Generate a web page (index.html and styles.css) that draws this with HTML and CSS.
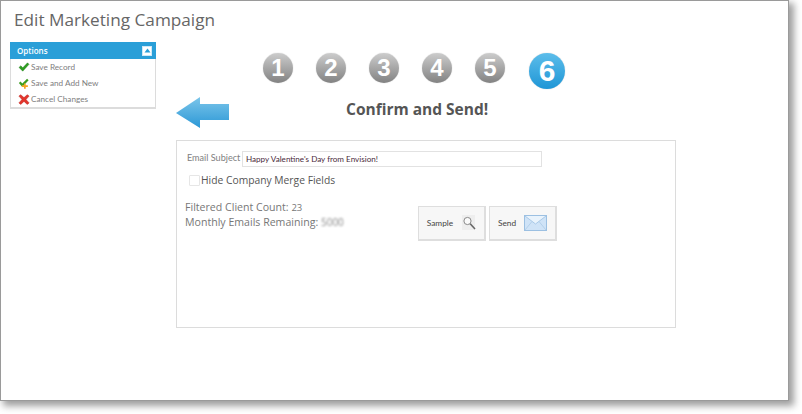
FILE: index.html
```html
<!DOCTYPE html>
<html lang="en">
<head>
<meta charset="utf-8">
<title>Edit Marketing Campaign</title>
<link rel="stylesheet" href="styles.css">
</head>
<body>
<div class="window">
  <h1 class="title">Edit Marketing Campaign</h1>
  <div class="layout">
    <aside class="options">
      <div class="options-head">
        <span>Options</span>
        <span class="collapse"><svg width="7" height="5" viewBox="0 0 7 5"><path d="M3.5 0.5 L6.5 4.5 H0.5 Z" fill="#2a9fd8"/></svg></span>
      </div>
      <ul class="options-list">
        <li><svg class="opt-icon" width="12" height="10" viewBox="0 0 14 12"><path d="M1 6.5 L3.2 4.5 L5.5 7 L11.2 1 L13 2.8 L5.5 11 Z" fill="#2e9e22" stroke="#1d7a16" stroke-width=".5"/></svg>Save Record</li>
        <li><svg class="opt-icon" width="12" height="11" viewBox="0 0 14 12"><path d="M1 5.5 L3 3.8 L5 6 L10.6 0.5 L12.4 2.2 L5 10 Z" fill="#3c9e22"/><path d="M7 6 H9 V8 H11.5 V10 H9 V12 H7 V10 H4.5 V8 H7 Z" fill="#f5a623"/></svg>Save and Add New</li>
        <li><svg class="opt-icon" width="12" height="11" viewBox="0 0 14 12"><path d="M1 2 L3.2 0.4 L7 3.8 L10.8 0.4 L13 2 L9.4 6 L13 10 L10.8 11.8 L7 8.2 L3.2 11.8 L1 10 L4.6 6 Z" fill="#e2352c" stroke="#b8221c" stroke-width=".5"/></svg>Cancel Changes</li>
      </ul>
    </aside>
    <main class="content">
      <ol class="steps">
        <li class="step">1</li>
        <li class="step">2</li>
        <li class="step">3</li>
        <li class="step">4</li>
        <li class="step">5</li>
        <li class="step step-active">6</li>
      </ol>
      <div class="heading-row">
        <svg class="back-arrow" width="53" height="31" viewBox="0 0 53 31"><defs><linearGradient id="arrowFill" x1="0" y1="0" x2="0" y2="1"><stop offset="0" stop-color="#7cc6ea"/><stop offset="1" stop-color="#2b97d6"/></linearGradient></defs><path d="M0 16 L24 0 V7 H53 V23 H24 V31 Z" fill="url(#arrowFill)"/></svg>
        <h2 class="heading">Confirm and Send!</h2>
      </div>
      <section class="panel">
        <div class="subject-row">
          <label class="subject-label" for="subject">Email Subject</label>
          <input class="subject-input" id="subject" type="text" value="Happy Valentine's Day from Envision!">
        </div>
        <label class="merge-row"><span class="fake-check"></span>Hide Company Merge Fields</label>
        <div class="send-row">
          <div class="counts">
            <div>Filtered Client Count: <span class="count-value">23</span></div>
            <div>Monthly Emails Remaining: <span class="count-value count-blur">5000</span></div>
          </div>
          <div class="actions">
            <button class="action action-sample" type="button">Sample
              <svg class="act-icon" width="14" height="16" viewBox="0 0 14 16"><rect x="0" y="0" width="13" height="15" fill="#eeeeee"/><circle cx="5.5" cy="6" r="3.6" fill="#fafafa" stroke="#8a8a8a"/><path d="M8.2 8.8 L13 14" stroke="#666" stroke-width="1.6"/></svg>
            </button>
            <button class="action" type="button">Send
              <svg class="act-icon" width="23" height="16" viewBox="0 0 23 16"><rect x=".5" y=".5" width="22" height="15" fill="#cfe3f7" stroke="#9cc0e2"/><path d="M1 1 L11.5 9 L22 1" fill="#e9f3fc" stroke="#a9c9e8"/><path d="M1 15 L8 6.5 M22 15 L15 6.5" stroke="#b4d0ea" fill="none"/></svg>
            </button>
          </div>
        </div>
      </section>
    </main>
  </div>
</div>
</body>
</html>
```
FILE: styles.css
```css
* { box-sizing: border-box; }
html, body { margin: 0; padding: 0; background: #fff; }
body { width: 802px; height: 414px; overflow: hidden; font-family: "Open Sans", "Liberation Sans", sans-serif; color: #666; }
.window {
  width: 789px; height: 401px;
  background: #fff;
  border: 1px solid #9a9a9a;
  box-shadow: 4px 4px 7px 1px rgba(0,0,0,.38);
  padding: 0 0 0 9px;
}
.title { margin: 0; padding: 7px 0 0 4px; height: 41px; font-size: 17.2px; line-height: 24px; font-weight: 400; color: #666; }
.layout { display: flex; align-items: flex-start; gap: 20px; }
.options { width: 146px; height: 67px; border: 1px solid #dcdcdc; border-top: 0; border-bottom-width: 2px; flex: none; }
.options-head {
  height: 17px; margin: 0 -1px; background: #2a9fd8; color: #fff;
  font-size: 8px; font-weight: 600; display: flex; align-items: center; justify-content: space-between;
  padding: 0 4px 0 7px;
}
.collapse { width: 10px; height: 10px; background: #fff; border: 1px solid #cfe8f6; display: flex; align-items: center; justify-content: center; outline: 1px solid #2a9fd8; }
.options-list { list-style: none; margin: 0; padding: 0 0 0 7px; font: 8.2px/14px Lato, sans-serif; color: #808080; }
.options-list li { height: 16px; display: flex; align-items: center; gap: 1px; }
.opt-icon { flex: none; }
.content { width: 500px; flex: none; }
.steps { list-style: none; margin: 0; padding: 11px 0 0 87px; display: flex; align-items: flex-start; gap: 23px; height: 55px; }
.step {
  width: 30px; height: 30px; border-radius: 50%;
  background: linear-gradient(#cccccc, #828282);
  color: #fff; font: 700 24px/30px "Liberation Sans", sans-serif; text-align: center;
  box-shadow: 0 0 1px rgba(0,0,0,.3);
}
.step-active { width: 36px; height: 36px; margin-left: 1px; background: linear-gradient(#5cbdea, #1f96d6); font-size: 30px; line-height: 36px; }
.heading-row { display: flex; align-items: flex-start; height: 43px; }
.back-arrow { flex: none; }
.heading { margin: 0; padding: 1px 0 0 117px; font-size: 15.5px; line-height: 22px; font-weight: 700; color: #555; white-space: nowrap; }
.panel { width: 500px; height: 188px; border: 1px solid #dcdcdc; padding: 10px 8px 0 8px; }
.subject-row { display: flex; align-items: center; height: 16px; }
.subject-label { width: 57px; padding-left: 2px; font: 9.1px/12px Lato, sans-serif; color: #808080; flex: none; margin-top: -2px; white-space: nowrap; }
.subject-input { width: 300px; height: 16px; border: 1px solid #e2e2e2; padding: 0 3px; font: 8.1px Lato, sans-serif; color: #4a2a3a; background: #fff; outline: 0; }
.merge-row { display: flex; align-items: center; height: 14px; margin-top: 6px; padding-left: 4px; font-size: 10.3px; color: #555; }
.fake-check { width: 11px; height: 11px; border: 1px solid #e6e6e6; border-radius: 1px; margin-right: 1px; }
.send-row { display: flex; align-items: flex-start; margin-top: 12px; }
.counts { width: 233px; font-size: 10.6px; line-height: 14px; color: #777; padding-top: 1px; flex: none; }
.count-value { font-size: 9.5px; }
.count-blur { filter: blur(1.2px); color: #888; font-size: 10px; }
.actions { display: flex; gap: 3px; margin-top: 7px; }
.action {
  width: 68px; height: 35px; background: #f7f7f7; border: 1px solid #dedede; border-width: 1px 2px 2px 1px;
  display: flex; align-items: center; justify-content: center; gap: 8px; padding: 0;
  font: 8.3px Lato, sans-serif; color: #444;
}
.action-sample { gap: 9px; }
.act-icon { flex: none; }
```
